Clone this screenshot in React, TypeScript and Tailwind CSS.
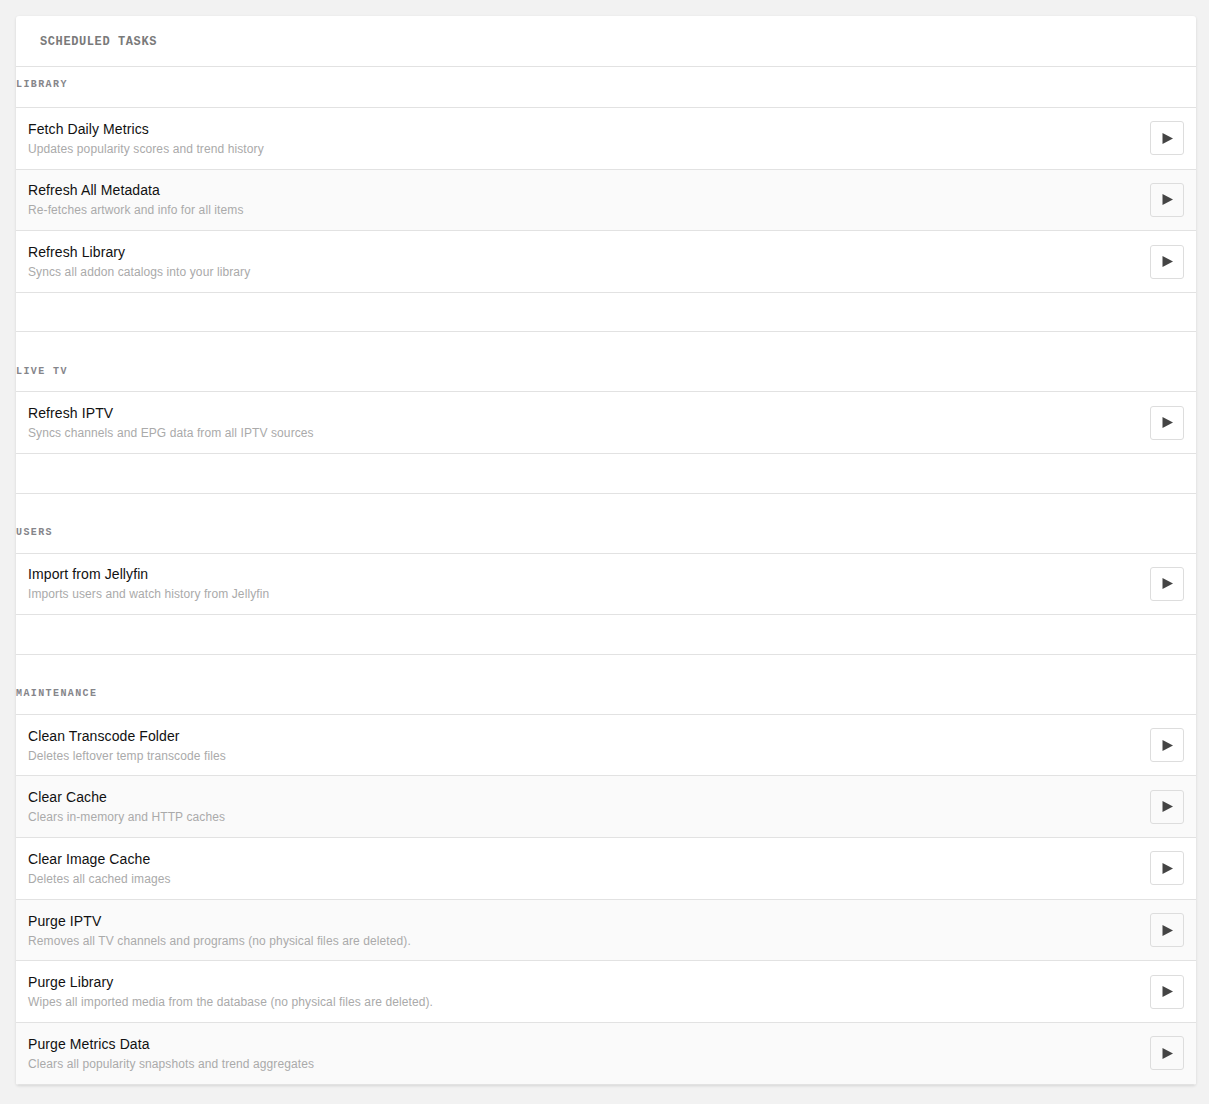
import React from 'react';

interface Task {
  name: string;
  description: string;
}

interface TaskGroup {
  label: string;
  tasks: Task[];
}

const groups: TaskGroup[] = [
  {
    label: 'Library',
    tasks: [
      { name: 'Fetch Daily Metrics', description: 'Updates popularity scores and trend history' },
      { name: 'Refresh All Metadata', description: 'Re-fetches artwork and info for all items' },
      { name: 'Refresh Library', description: 'Syncs all addon catalogs into your library' },
    ],
  },
  {
    label: 'Live TV',
    tasks: [
      { name: 'Refresh IPTV', description: 'Syncs channels and EPG data from all IPTV sources' },
    ],
  },
  {
    label: 'Users',
    tasks: [
      { name: 'Import from Jellyfin', description: 'Imports users and watch history from Jellyfin' },
    ],
  },
  {
    label: 'Maintenance',
    tasks: [
      { name: 'Clean Transcode Folder', description: 'Deletes leftover temp transcode files' },
      { name: 'Clear Cache', description: 'Clears in-memory and HTTP caches' },
      { name: 'Clear Image Cache', description: 'Deletes all cached images' },
      { name: 'Purge IPTV', description: 'Removes all TV channels and programs (no physical files are deleted).' },
      { name: 'Purge Library', description: 'Wipes all imported media from the database (no physical files are deleted).' },
      { name: 'Purge Metrics Data', description: 'Clears all popularity snapshots and trend aggregates' },
    ],
  },
];

function PlayButton() {
  return (
    <button
      type="button"
      className="flex h-[34px] w-[34px] items-center justify-center rounded-[3px] border border-[#dddddd] bg-transparent"
    >
      <svg width="11" height="11" viewBox="0 0 11 11" aria-hidden="true">
        <path d="M0.5 0 L11 5.5 L0.5 11 Z" fill="#444444" />
      </svg>
    </button>
  );
}

function TaskRow({ task, shaded }: { task: Task; shaded: boolean }) {
  return (
    <div
      className={`flex h-[61.67px] items-center justify-between border-b border-[#e2e2e2] pl-3 pr-3 ${
        shaded ? 'bg-[#fafafa]' : 'bg-white'
      }`}
    >
      <div className="flex flex-col">
        <span className="text-[14px] leading-[18px] tracking-[0.1px] text-[#111111]">{task.name}</span>
        <span className="mt-[3px] text-[12px] leading-[16px] tracking-[0.1px] text-[#aaaaaa]">
          {task.description}
        </span>
      </div>
      <PlayButton />
    </div>
  );
}

export default function App() {
  return (
    <div className="min-h-[1104px] bg-[#f2f2f2] pb-[19px] pl-4 pr-[13px] pt-4 font-['Liberation_Sans',Arial,sans-serif]">
      <div className="overflow-hidden rounded-[3px] bg-white shadow-[0_1px_3px_rgba(0,0,0,0.12)]">
        <div className="flex h-[51px] items-center border-b border-[#e2e2e2] pl-6 pt-[2px]">
          <h2 className="font-['Liberation_Mono',monospace] text-[12px] font-bold uppercase tracking-[0.6px] text-[#7a7a7a]">
            Scheduled Tasks
          </h2>
        </div>

        {groups.map((group, gi) => {
          const last = gi === groups.length - 1;
          return (
            <section key={group.label}>
              <div
                className={`flex items-center border-b border-[#e2e2e2] ${
                  gi === 0 ? 'h-[41px] pb-[5px]' : 'h-[60px] pt-[19px]'
                }`}
              >
                <h3 className="font-['Liberation_Mono',monospace] text-[10px] font-bold uppercase tracking-[1.4px] text-[#85858a]">
                  {group.label}
                </h3>
              </div>
              {group.tasks.map((task, ti) => (
                <TaskRow key={task.name} task={task} shaded={ti % 2 === 1} />
              ))}
              {!last && <div className="h-[39.5px] border-b border-[#e2e2e2]" />}
            </section>
          );
        })}
      </div>
    </div>
  );
}
